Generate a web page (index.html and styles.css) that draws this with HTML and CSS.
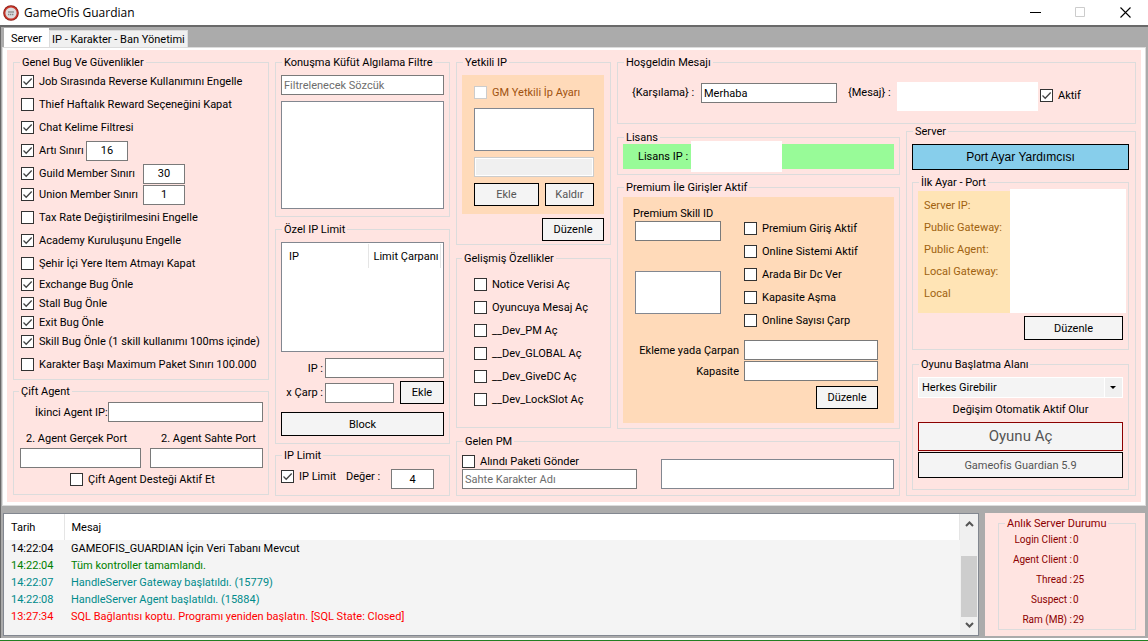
FILE: index.html
```html
<!DOCTYPE html>
<html lang="tr">
<head>
<meta charset="utf-8">
<title>GameOfis Guardian</title>
<link rel="stylesheet" href="styles.css">
</head>
<body>
<header class="titlebar">
  <svg class="app-icon" viewBox="0 0 16 16" width="16" height="16">
    <circle cx="8" cy="8" r="7.8" fill="#8a1a12"/>
    <circle cx="8" cy="8" r="7" fill="#c9382c"/>
    <circle cx="8" cy="8" r="5.600" fill="#dcdcde"/>
    <path d="M5 6.5h6M5 7.5h6" stroke="#9a9a9a" stroke-width=".8"/>
    <path d="M5 9.500h6" stroke="#888" stroke-width="1.6" stroke-dasharray="1.4 .6"/>
  </svg>
  <span class="app-title">GameOfis Guardian</span>
  <div class="window-buttons">
    <button aria-label="Minimize"><svg width="11" height="11" viewBox="0 0 11 11"><path d="M0 5.5h11" stroke="#000"/></svg></button>
    <button aria-label="Maximize" disabled><svg width="11" height="11" viewBox="0 0 11 11"><path d="M.5.5h9v9h-9z" fill="none" stroke="#ccc"/></svg></button>
    <button aria-label="Close"><svg width="11" height="11" viewBox="0 0 11 11"><path d="M.5.5l10 10M10.5.5l-10 10" stroke="#000" stroke-width="1.1"/></svg></button>
  </div>
</header>

<main class="client">
  <nav class="tabs">
    <button class="tab active">Server</button>
    <button class="tab">IP - Karakter - Ban Yönetimi</button>
  </nav>

  <div class="page">
    <div class="column">
      <fieldset class="guards">
        <legend>Genel Bug Ve Güvenlikler</legend>
        <div class="checks">
          <label class="check"><input type="checkbox" checked>Job Sırasında Reverse Kullanımını Engelle</label>
          <label class="check"><input type="checkbox">Thief Haftalık Reward Seçeneğini Kapat</label>
          <label class="check"><input type="checkbox" checked>Chat Kelime Filtresi</label>
          <div class="row"><label class="check level"><input type="checkbox" checked>Artı Sınırı</label><input class="num" type="text" value="16" aria-label="Artı Sınırı"></div>
          <div class="row"><label class="check member"><input type="checkbox" checked>Guild Member Sınırı</label><input class="num" type="text" value="30" aria-label="Guild Member Sınırı"></div>
        </div>
        <div class="checks">
          <div class="row"><label class="check member"><input type="checkbox" checked>Union Member Sınırı</label><input class="num" type="text" value="1" aria-label="Union Member Sınırı"></div>
          <label class="check"><input type="checkbox">Tax Rate Değiştirilmesini Engelle</label>
          <label class="check"><input type="checkbox" checked>Academy Kuruluşunu Engelle</label>
          <label class="check"><input type="checkbox">Şehir İçi Yere Item Atmayı Kapat</label>
        </div>
        <div class="checks tight">
          <label class="check"><input type="checkbox" checked>Exchange Bug Önle</label>
          <label class="check"><input type="checkbox" checked>Stall Bug Önle</label>
          <label class="check"><input type="checkbox" checked>Exit Bug Önle</label>
          <label class="check"><input type="checkbox" checked>Skill Bug Önle (1 skill kullanımı 100ms içinde)</label>
        </div>
        <div class="checks">
          <label class="check"><input type="checkbox">Karakter Başı Maximum Paket Sınırı 100.000</label>
        </div>
      </fieldset>

      <fieldset class="agent">
        <legend>Çift Agent</legend>
        <div class="row agent-ip"><label for="agent-ip">İkinci Agent IP:</label><input id="agent-ip" type="text"></div>
        <div class="agent-ports">
          <label for="real-port">2. Agent Gerçek Port</label>
          <label for="fake-port">2. Agent Sahte Port</label>
          <input id="real-port" type="text">
          <input id="fake-port" type="text">
        </div>
        <label class="check agent-on"><input type="checkbox">Çift Agent Desteği Aktif Et</label>
      </fieldset>
    </div>

    <div class="column middle">
      <fieldset class="filter">
        <legend>Konuşma Küfüt Algılama Filtre</legend>
        <input type="text" placeholder="Filtrelenecek Sözcük" aria-label="Filtrelenecek Sözcük">
        <div class="listbox words"></div>
      </fieldset>

      <fieldset class="iplist">
        <legend>Özel IP Limit</legend>
        <div class="listbox limits">
          <table class="limit-table"><thead><tr><th class="ip-col">IP</th><th>Limit Çarpanı</th></tr></thead></table>
        </div>
        <div class="ip-form">
          <label for="lim-ip">IP :</label><input id="lim-ip" class="span" type="text">
          <label for="lim-x">x Çarp :</label><input id="lim-x" type="text"><button class="btn">Ekle</button>
        </div>
        <button class="btn block">Block</button>
      </fieldset>

      <fieldset class="iplimit">
        <legend>IP Limit</legend>
        <div class="row">
          <label class="check"><input type="checkbox" checked>IP Limit</label>
          <label class="value" for="lim-val">Değer :</label>
          <input id="lim-val" class="num" type="text" value="4">
        </div>
      </fieldset>
    </div>

    <div class="right">
      <div class="column ips">
        <fieldset class="allowed">
          <legend>Yetkili IP</legend>
          <div class="peach gm">
            <label class="check off"><input type="checkbox" disabled>GM Yetkili İp Ayarı</label>
            <div class="listbox small"></div>
            <input type="text" disabled aria-label="IP">
            <div class="row gm-buttons"><button class="btn" disabled>Ekle</button><button class="btn" disabled>Kaldır</button></div>
          </div>
          <button class="btn edit">Düzenle</button>
        </fieldset>
        <fieldset class="advanced">
          <legend>Gelişmiş Özellikler</legend>
          <div class="checks">
            <label class="check"><input type="checkbox">Notice Verisi Aç</label>
            <label class="check"><input type="checkbox">Oyuncuya Mesaj Aç</label>
            <label class="check"><input type="checkbox">__Dev_PM Aç</label>
            <label class="check"><input type="checkbox">__Dev_GLOBAL Aç</label>
            <label class="check"><input type="checkbox">__Dev_GiveDC Aç</label>
            <label class="check"><input type="checkbox">__Dev_LockSlot Aç</label>
          </div>
        </fieldset>
      </div>

      <fieldset class="welcome">
        <legend>Hoşgeldin Mesajı</legend>
        <div class="row welcome-row">
          <label class="greet" for="greet">{Karşılama} :</label>
          <input id="greet" type="text" value="Merhaba">
          <span class="msg">{Mesaj} :</span>
          <div class="blank"></div>
          <label class="check"><input type="checkbox" checked>Aktif</label>
        </div>
      </fieldset>

      <div class="column center">
        <fieldset class="license">
          <legend>Lisans</legend>
          <div class="green"><span>Lisans IP :</span><div class="blank"></div></div>
        </fieldset>
        <fieldset class="premium">
          <legend>Premium İle Girişler Aktif</legend>
          <div class="peach prem">
            <div class="prem-top">
              <div class="skill">
                <label for="skill">Premium Skill ID</label>
                <input id="skill" type="text">
                <div class="listbox small"></div>
              </div>
              <div class="checks">
                <label class="check"><input type="checkbox">Premium Giriş Aktif</label>
                <label class="check"><input type="checkbox">Online Sistemi Aktif</label>
                <label class="check"><input type="checkbox">Arada Bir Dc Ver</label>
                <label class="check"><input type="checkbox">Kapasite Aşma</label>
                <label class="check"><input type="checkbox">Online Sayısı Çarp</label>
              </div>
            </div>
            <div class="prem-form">
              <label for="mult">Ekleme yada Çarpan</label><input id="mult" type="text">
              <label for="cap">Kapasite</label><input id="cap" type="text">
            </div>
            <button class="btn edit">Düzenle</button>
          </div>
        </fieldset>
      </div>

      <fieldset class="pm">
        <legend>Gelen PM</legend>
        <div class="pm-row">
          <div class="pm-left">
            <label class="check"><input type="checkbox">Alındı Paketi Gönder</label>
            <input type="text" placeholder="Sahte Karakter Adı" aria-label="Sahte Karakter Adı">
          </div>
          <div class="listbox pm-box"></div>
        </div>
      </fieldset>

      <fieldset class="server">
        <legend>Server</legend>
        <button class="btn helper">Port Ayar Yardımcısı</button>
        <fieldset class="ports">
          <legend>İlk Ayar - Port</legend>
          <div class="port-panel">
            <ul class="port-labels">
              <li>Server IP:</li><li>Public Gateway:</li><li>Public Agent:</li><li>Local Gateway:</li><li>Local</li>
            </ul>
            <div class="blank"></div>
          </div>
          <button class="btn edit wide">Düzenle</button>
        </fieldset>
        <fieldset class="launch">
          <legend>Oyunu Başlatma Alanı</legend>
          <select aria-label="Oyunu Başlatma Alanı"><option>Herkes Girebilir</option></select>
          <p>Değişim Otomatik Aktif Olur</p>
          <button class="btn open" disabled>Oyunu Aç</button>
          <button class="btn version" disabled>Gameofis Guardian 5.9</button>
        </fieldset>
      </fieldset>
    </div>
  </div>

  <div class="bottom">
    <div class="log">
      <table class="log-table">
        <thead><tr><th class="time">Tarih</th><th>Mesaj</th></tr></thead>
        <tbody>
          <tr><td>14:22:04</td><td>GAMEOFIS_GUARDIAN İçin Veri Tabanı Mevcut</td></tr>
          <tr class="ok"><td>14:22:04</td><td>Tüm kontroller tamamlandı.</td></tr>
          <tr class="info"><td>14:22:07</td><td>HandleServer Gateway başlatıldı. (15779)</td></tr>
          <tr class="info"><td>14:22:08</td><td>HandleServer Agent başlatıldı. (15884)</td></tr>
          <tr class="error"><td>13:27:34</td><td>SQL Bağlantısı koptu. Programı yeniden başlatın. [SQL State: Closed]</td></tr>
        </tbody>
      </table>
      <div class="scrollbar">
        <svg width="9" height="6" viewBox="0 0 9 6"><path d="M1 5l3.500-3.500L8 5" fill="none" stroke="#555" stroke-width="2"/></svg>
        <div class="track"><div class="thumb"></div></div>
        <svg width="9" height="6" viewBox="0 0 9 6"><path d="M1 1l3.500 3.500L8 1" fill="none" stroke="#555" stroke-width="2"/></svg>
      </div>
    </div>
    <div class="status">
      <fieldset>
        <legend>Anlık Server Durumu</legend>
        <dl>
          <dt>Login Client :</dt><dd>0</dd>
          <dt>Agent Client :</dt><dd>0</dd>
          <dt>Thread :</dt><dd>25</dd>
          <dt>Suspect :</dt><dd>0</dd>
          <dt>Ram (MB) :</dt><dd>29</dd>
        </dl>
      </fieldset>
    </div>
  </div>
</main>
</body>
</html>
```
FILE: styles.css
```css
* { box-sizing: border-box; }

body {
  margin: 0;
  min-height: 100vh;
  display: flex;
  flex-direction: column;
  background: #fff;
  border-bottom: 1px solid #228022;
  color: #000;
  font: 11px/13px Roboto, "Liberation Sans", Arial, sans-serif;
}

input, button, select { font: inherit; color: inherit; margin: 0; border-radius: 0; }

/* Title bar */
.titlebar { display: flex; align-items: center; height: 25px; padding-left: 3px; gap: 5px; }
.app-title { font: 12px/16px "Open Sans", "Noto Sans", sans-serif; }
.window-buttons { display: flex; margin-left: auto; }
.window-buttons button {
  width: 45px; height: 25px; padding: 0; border: 0; background: none;
  display: flex; align-items: center; justify-content: center;
}

/* Window client area */
.client {
  flex: 1;
  display: flex;
  flex-direction: column;
  margin-bottom: 2px;
  padding: 1px 3px 2px 2px;
  border-top: 2px solid #696969;
  border-left: 1px solid #696969;
  background: #ababab;
}
.tabs { display: flex; align-items: flex-end; height: 20px; padding-left: 1px; }
.tab {
  height: 18px; padding: 0 2px; border: 1px solid #dcdcdc; border-bottom: 0; background: #f0f0f0;
}
.tab.active { height: 20px; padding: 0 6px; background: #fff; border-color: #fff; }

.page {
  display: grid;
  grid-template-columns: minmax(0, 256fr) minmax(0, 175fr) minmax(0, 680fr);
  gap: 6px;
  padding: 6px 5px 6px 6px;
  background: #ffe4e1;
  border: solid #fff;
  border-width: 2px 4px 3px 4px;
  outline: 1px solid #dcdcdc;
}
.column { display: flex; flex-direction: column; min-width: 0; }

fieldset { margin: 0; padding: 0 5px; min-width: 0; border: 1px solid #dcdcdc; }
legend { margin-left: 1px; padding: 0 2px; }

/* Controls */
input[type="text"] {
  display: block; width: 100%; min-width: 0; height: 20px; padding: 0 2px;
  border: 1px solid #7a7a7a; background: #fff;
}
input[type="text"]:disabled { border-color: #ccc; background: #f0f0f0; box-shadow: inset 0 0 0 1px #fff; }
input::placeholder { color: #6d6d6d; opacity: 1; }
input[type="checkbox"] {
  appearance: none; flex: none; width: 13px; height: 13px;
  border: 1px solid #333; background: #fff;
}
input[type="checkbox"]:checked {
  background: #fff url("data:image/svg+xml,%3Csvg xmlns='http://www.w3.org/2000/svg' viewBox='0 0 11 11'%3E%3Cpath d='M1.500 5.500l2.700 2.700L9.700 2.500' fill='none' stroke='%23444' stroke-width='1.300'/%3E%3C/svg%3E");
}
input[type="checkbox"]:disabled { border-color: #ccc; }
input[type="text"].num { flex: none; width: 42px; margin: -4px 0; text-align: center; }
.check { display: flex; align-items: center; gap: 5px; white-space: nowrap; }
.checks { display: flex; flex-direction: column; gap: 10px; }
.row { display: flex; align-items: center; white-space: nowrap; }
.btn {
  display: block; height: 23px; padding: 0; border: 1px solid #000; background: #f4f4f4; text-align: center;
}
.btn:disabled { color: #555; }
.listbox { border: 1px solid #828790; background: #fff; }
.blank { background: #fff; }
.peach { background: #ffdab9; }
.small { height: 43px; }
.edit { width: 62px; margin-left: auto; }

/* Bug guards */
.guards { padding: 6px 7px 8px; }
.guards .checks + .checks { margin-top: 8px; }
.guards .tight { gap: 6px; }
.guards .tight + .checks { margin-top: 10px; }
.guards .row { height: 13px; }
.level { width: 65px; }
.member { width: 122px; }
.guards legend, .agent legend { margin-left: -1px; }

.agent { margin-top: 5px; padding: 4px 5px 8px 6px; }
.agent-ip { padding-left: 15px; }
.agent-ip label { flex: 74; }
.agent-ip input[type="text"] { flex: 154; }
.agent-ports {
  display: grid; grid-template-columns: 121fr 113fr; column-gap: 9px; row-gap: 3px; margin-top: 10px;
}
.agent-ports label { padding-left: 6px; }
.agent-ports label + label { padding-left: 11px; }
.agent-on { margin-top: 5px; padding-left: 50px; }

/* Filter and IP limit column */
.filter { padding-top: 6px; padding-bottom: 7px; }
.words { height: 108px; margin-top: 6px; }
.iplist { margin-top: 6px; padding-top: 6px; padding-bottom: 7px; }
.limits { height: 110px; padding: 1px 2px; }
.limit-table { width: 100%; border-collapse: collapse; table-layout: fixed; }
.limit-table th { height: 24px; padding: 0 5px; border-right: 1px solid #e5e5e5; font-weight: normal; text-align: left; white-space: nowrap; }
.ip-col { width: 84px; }
.ip-form {
  display: grid; grid-template-columns: 42px 69px 1fr; align-items: center;
  column-gap: 2px; row-gap: 3px; margin-top: 6px;
}
.ip-form label { text-align: right; white-space: nowrap; }
.ip-form .span { grid-column: span 2; }
.ip-form .btn { margin-left: 4px; }
.iplist .block { width: 100%; height: 24px; margin-top: 8px; }
.iplimit { margin-top: 5px; padding-top: 7px; padding-bottom: 6px; }
.iplimit .row { align-items: flex-start; }
.iplimit label { padding-top: 1px; }
.iplimit .check { width: 52px; }
.iplimit .value { width: 35px; margin-left: 13px; }
.iplimit input[type="text"].num { width: 43px; margin: 0 0 0 10px; }

/* Right area */
.right {
  display: grid;
  grid-template-columns: minmax(0, 155fr) minmax(0, 283fr) minmax(0, 230fr);
  grid-template-rows: auto auto 1fr;
  column-gap: 6px;
  grid-template-areas: "ips welcome welcome" "ips center server" "pm pm server";
}
.ips { grid-area: ips; }
.welcome { grid-area: welcome; }
.center { grid-area: center; }
.pm { grid-area: pm; }
.server { grid-area: server; }

.allowed { padding: 6px 6px 3px 5px; }
.gm { display: flex; flex-direction: column; gap: 6px; padding: 11px 10px 8px 12px; }
.gm .listbox { margin-top: 3px; }
.gm .off { color: #a0520f; }
.gm-buttons { gap: 6px; }
.gm-buttons .btn { flex: 65; }
.gm-buttons .btn + .btn { flex: 49; }
.allowed .edit { margin-top: 4px; }
.advanced { margin-top: 7px; padding: 13px 17px 21px; }
.advanced legend { margin-left: -12px; }

.welcome { padding: 13px 14px 12px; margin-bottom: 1px; }
.welcome legend { margin-left: -8px; }
.welcome-row { align-items: flex-start; }
.welcome-row .greet { width: 69px; }
.welcome-row .greet, .welcome-row .msg { padding-top: 4px; }
.welcome-row input[type="text"] { flex: 0 1 136px; margin-top: 1px; }
.welcome-row .msg { width: 49px; margin-left: 11px; }
.welcome-row .blank { flex: 0 1 141px; height: 29px; }
.welcome-row .check { margin: 7px 0 0 2px; }

.center { padding-top: 6px; }
.license { padding-bottom: 5px; }
.green { display: flex; align-items: center; height: 25px; padding-left: 15px; background: #98fb98; }
.green span { width: 53px; white-space: nowrap; }
.green .blank { width: 91px; height: 31px; }
.premium { margin-top: 6px; padding-top: 3px; padding-bottom: 5px; }
.prem { padding: 10px 16px 14px 10px; }
.prem-top { display: flex; gap: 23px; }
.prem-top .checks { padding-top: 15px; }
.skill { width: 88px; white-space: nowrap; }
.skill input[type="text"], .skill .small { margin-left: 2px; width: 86px; }
.skill .small { margin-top: 30px; }
.skill input[type="text"] { margin-top: 1px; }
.prem-form {
  display: grid; grid-template-columns: 1fr 134px; column-gap: 5px; row-gap: 1px;
  align-items: center; margin-top: 13px; text-align: right;
}
.prem .edit { margin-top: 5px; }

.pm { margin-top: 6px; padding: 7px 5px 6px; }
.pm-row { display: flex; justify-content: space-between; align-items: flex-end; }
.pm-left { flex: 176; }
.pm-left input[type="text"] { margin-top: 1px; }
.pm-box { flex: 232; height: 30px; margin-left: 24px; }

.server { padding: 6px 6px 5px 5px; }
.helper { width: 100%; height: 26px; background: #87ceeb; font: 12px/14px "Liberation Sans", Arial, sans-serif; }
.ports { margin-top: 6px; padding-top: 2px; padding-bottom: 9px; }
.port-panel { display: grid; grid-template-columns: 92fr 116fr; height: 122px; margin-right: -3px; }
.port-labels { margin: 0; padding: 8px 6px 0; list-style: none; color: #a0620f; background: #ffe4b5; white-space: nowrap; }
.port-labels li { height: 13px; margin-bottom: 9px; }
.port-panel .blank { margin-top: -2px; }
.wide { width: 99px; height: 24px; margin-top: 3px; }
.launch { margin-top: 8px; padding-top: 6px; padding-bottom: 11px; }
.launch select {
  display: block; width: 100%; height: 21px; padding: 0 3px; appearance: none; border: 1px solid #fff;
  background: #f4f4f4 url("data:image/svg+xml,%3Csvg xmlns='http://www.w3.org/2000/svg' width='18' height='19'%3E%3Cpath d='M0 0h18v19H0z' fill='%23f0f0f0'/%3E%3Cpath d='M.5 0v19' stroke='%23fff'/%3E%3Cpath d='M6 8h6l-3 3z'/%3E%3C/svg%3E") no-repeat right center;
}
.launch p { margin: 5px 0 6px; text-align: center; }
.launch .btn { width: 100%; height: 26px; }
.launch .open { height: 29px; margin-bottom: 1px; border-color: #8b0000; font-size: 15px; }

/* Log and status */
.bottom { flex: 1; display: grid; grid-template-columns: minmax(0, 976fr) minmax(0, 160fr); gap: 6px; margin-top: 8px; }
.log { display: flex; border: 1px solid #828790; background: #f4f4f4; }
.log-table { flex: 1; border-collapse: collapse; align-self: flex-start; table-layout: fixed; }
.log-table th { height: 26px; padding: 0 7px; background: #fff; border-right: 1px solid #e5e5e5; font-weight: normal; text-align: left; }
.log-table .time { width: 60px; }
.log-table td { height: 17px; padding: 0 7px; white-space: nowrap; }
.ok { color: #008000; }
.info { color: #008b8b; }
.error { color: #f00; }
.scrollbar { width: 18px; display: flex; flex-direction: column; align-items: center; padding: 7px 1px; background: #f0f0f0; }
.track { flex: 1; align-self: stretch; display: flex; align-items: flex-end; padding: 5px 0; }
.thumb { width: 100%; height: 61px; background: #cdcdcd; }
.status { padding: 4px 9px 6px 13px; background: #ffe4e1; color: #8b0000; }
.status fieldset { height: 100%; }
.status dl { display: grid; grid-template-columns: 68px 1fr; column-gap: 1px; row-gap: 7px; margin: 3px 0 0; font-size: 10px; }
.status dt { text-align: right; white-space: nowrap; }
.status dd { margin: 0; }
```
